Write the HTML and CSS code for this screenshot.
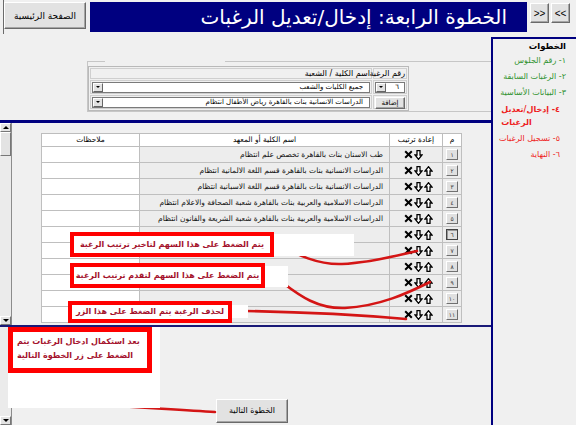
FILE: index.html
```html
<!DOCTYPE html>
<html lang="ar">
<head>
<meta charset="utf-8">
<title>الخطوة الرابعة</title>
<link rel="stylesheet" href="styles.css">
</head>
<body>
<div class="page">
  <header class="top">
    <div class="home-wrap"><button class="btn home">الصفحة الرئيسية</button></div>
    <div class="titlebar">الخطوة الرابعة: إدخال/تعديل الرغبات</div>
    <div class="navs"><button class="btn nav">&lt;&lt;</button><button class="btn nav">&gt;&gt;</button></div>
  </header>

  <div class="frames">
    <div class="leftcol">
      <section class="formframe">
        <fieldset class="fs">
          <legend class="lg"></legend>
          <div class="addbox">
            <div class="arow head">
              <div class="acell wide"><span class="ah">اسم الكلية / الشعبة</span></div>
              <div class="acell narrow"><span class="ah">رقم الرغبة</span></div>
            </div>
            <div class="arow">
              <div class="acell wide"><div class="sel"><span class="sel-b"></span><span class="sel-v" dir="rtl">جميع الكليات والشعب</span></div></div>
              <div class="acell narrow"><div class="sel sm"><span class="sel-b"></span><span class="sel-v" dir="rtl">٦</span></div></div>
            </div>
            <div class="arow">
              <div class="acell wide"><div class="sel"><span class="sel-b"></span><span class="sel-v" dir="rtl">الدراسات الانسانية بنات بالقاهرة رياض الأطفال انتظام</span></div></div>
              <div class="acell narrow"><button class="btn add">إضافة</button></div>
            </div>
          </div>
        </fieldset>
      </section>

      <section class="mainframe">
        <div class="vscroll">
          <span class="sb-btn"><i class="tri up"></i></span>
          <span class="sb-thumb"></span>
          <span class="sb-track"></span>
          <span class="sb-btn"><i class="tri down"></i></span>
        </div>
        <div class="tblwrap">
          <table class="grid" dir="rtl">
            <colgroup><col class="c-num"><col class="c-ord"><col class="c-name"><col class="c-note"></colgroup>
            <thead>
              <tr><th>م</th><th>إعادة ترتيب</th><th>اسم الكلية أو المعهد</th><th>ملاحظات</th></tr>
            </thead>
            <tbody>
              <tr><td class="num"><span class="nb">١</span></td><td class="ord"><span class="icons"><svg class="ic" viewBox="0 0 9 9"><path d="M1.2 1.2L7.8 7.8M7.8 1.2L1.2 7.8"/></svg><svg class="ic ar" viewBox="0 0 8 10"><path d="M2.5 .7H5.5V5H7.4L4 9.3L.6 5H2.5Z"/></svg></span></td><td class="name">طب الاسنان بنات بالقاهرة تخصص علم انتظام</td><td class="note"></td></tr>
              <tr><td class="num"><span class="nb">٢</span></td><td class="ord"><span class="icons"><svg class="ic" viewBox="0 0 9 9"><path d="M1.2 1.2L7.8 7.8M7.8 1.2L1.2 7.8"/></svg><svg class="ic ar" viewBox="0 0 8 10"><path d="M2.5 .7H5.5V5H7.4L4 9.3L.6 5H2.5Z"/></svg><svg class="ic ar" viewBox="0 0 8 10"><path d="M2.5 9.3H5.5V5H7.4L4 .7L.6 5H2.5Z"/></svg></span></td><td class="name">الدراسات الانسانية بنات بالقاهرة قسم اللغة الالمانية انتظام</td><td class="note"></td></tr>
              <tr><td class="num"><span class="nb">٣</span></td><td class="ord"><span class="icons"><svg class="ic" viewBox="0 0 9 9"><path d="M1.2 1.2L7.8 7.8M7.8 1.2L1.2 7.8"/></svg><svg class="ic ar" viewBox="0 0 8 10"><path d="M2.5 .7H5.5V5H7.4L4 9.3L.6 5H2.5Z"/></svg><svg class="ic ar" viewBox="0 0 8 10"><path d="M2.5 9.3H5.5V5H7.4L4 .7L.6 5H2.5Z"/></svg></span></td><td class="name">الدراسات الانسانية بنات بالقاهرة قسم اللغة الاسبانية انتظام</td><td class="note"></td></tr>
              <tr><td class="num"><span class="nb">٤</span></td><td class="ord"><span class="icons"><svg class="ic" viewBox="0 0 9 9"><path d="M1.2 1.2L7.8 7.8M7.8 1.2L1.2 7.8"/></svg><svg class="ic ar" viewBox="0 0 8 10"><path d="M2.5 .7H5.5V5H7.4L4 9.3L.6 5H2.5Z"/></svg><svg class="ic ar" viewBox="0 0 8 10"><path d="M2.5 9.3H5.5V5H7.4L4 .7L.6 5H2.5Z"/></svg></span></td><td class="name">الدراسات الاسلامية والعربية بنات بالقاهرة شعبة الصحافة والاعلام انتظام</td><td class="note"></td></tr>
              <tr><td class="num"><span class="nb">٥</span></td><td class="ord"><span class="icons"><svg class="ic" viewBox="0 0 9 9"><path d="M1.2 1.2L7.8 7.8M7.8 1.2L1.2 7.8"/></svg><svg class="ic ar" viewBox="0 0 8 10"><path d="M2.5 .7H5.5V5H7.4L4 9.3L.6 5H2.5Z"/></svg><svg class="ic ar" viewBox="0 0 8 10"><path d="M2.5 9.3H5.5V5H7.4L4 .7L.6 5H2.5Z"/></svg></span></td><td class="name">الدراسات الاسلامية والعربية بنات بالقاهرة شعبة الشريعة والقانون انتظام</td><td class="note"></td></tr>
              <tr><td class="num"><span class="nb sel6">٦</span></td><td class="ord"><span class="icons"><svg class="ic" viewBox="0 0 9 9"><path d="M1.2 1.2L7.8 7.8M7.8 1.2L1.2 7.8"/></svg><svg class="ic ar" viewBox="0 0 8 10"><path d="M2.5 .7H5.5V5H7.4L4 9.3L.6 5H2.5Z"/></svg><svg class="ic ar" viewBox="0 0 8 10"><path d="M2.5 9.3H5.5V5H7.4L4 .7L.6 5H2.5Z"/></svg></span></td><td class="name"></td><td class="note"></td></tr>
              <tr><td class="num"><span class="nb">٧</span></td><td class="ord"><span class="icons"><svg class="ic" viewBox="0 0 9 9"><path d="M1.2 1.2L7.8 7.8M7.8 1.2L1.2 7.8"/></svg><svg class="ic ar" viewBox="0 0 8 10"><path d="M2.5 .7H5.5V5H7.4L4 9.3L.6 5H2.5Z"/></svg><svg class="ic ar" viewBox="0 0 8 10"><path d="M2.5 9.3H5.5V5H7.4L4 .7L.6 5H2.5Z"/></svg></span></td><td class="name"></td><td class="note"></td></tr>
              <tr><td class="num"><span class="nb">٨</span></td><td class="ord"><span class="icons"><svg class="ic" viewBox="0 0 9 9"><path d="M1.2 1.2L7.8 7.8M7.8 1.2L1.2 7.8"/></svg><svg class="ic ar" viewBox="0 0 8 10"><path d="M2.5 .7H5.5V5H7.4L4 9.3L.6 5H2.5Z"/></svg><svg class="ic ar" viewBox="0 0 8 10"><path d="M2.5 9.3H5.5V5H7.4L4 .7L.6 5H2.5Z"/></svg></span></td><td class="name"></td><td class="note"></td></tr>
              <tr><td class="num"><span class="nb">٩</span></td><td class="ord"><span class="icons"><svg class="ic" viewBox="0 0 9 9"><path d="M1.2 1.2L7.8 7.8M7.8 1.2L1.2 7.8"/></svg><svg class="ic ar" viewBox="0 0 8 10"><path d="M2.5 .7H5.5V5H7.4L4 9.3L.6 5H2.5Z"/></svg><svg class="ic ar" viewBox="0 0 8 10"><path d="M2.5 9.3H5.5V5H7.4L4 .7L.6 5H2.5Z"/></svg></span></td><td class="name"></td><td class="note"></td></tr>
              <tr><td class="num"><span class="nb">١٠</span></td><td class="ord"><span class="icons"><svg class="ic" viewBox="0 0 9 9"><path d="M1.2 1.2L7.8 7.8M7.8 1.2L1.2 7.8"/></svg><svg class="ic ar" viewBox="0 0 8 10"><path d="M2.5 .7H5.5V5H7.4L4 9.3L.6 5H2.5Z"/></svg><svg class="ic ar" viewBox="0 0 8 10"><path d="M2.5 9.3H5.5V5H7.4L4 .7L.6 5H2.5Z"/></svg></span></td><td class="name"></td><td class="note"></td></tr>
              <tr><td class="num"><span class="nb">١١</span></td><td class="ord"><span class="icons"><svg class="ic" viewBox="0 0 9 9"><path d="M1.2 1.2L7.8 7.8M7.8 1.2L1.2 7.8"/></svg><svg class="ic ar" viewBox="0 0 8 10"><path d="M2.5 .7H5.5V5H7.4L4 9.3L.6 5H2.5Z"/></svg><svg class="ic ar" viewBox="0 0 8 10"><path d="M2.5 9.3H5.5V5H7.4L4 .7L.6 5H2.5Z"/></svg></span></td><td class="name"></td><td class="note"></td></tr>
            </tbody>
          </table>
        </div>
      </section>

      <section class="bottomframe">
        <div class="vscroll">
          <span class="sb-track"></span>
          <span class="sb-btn"><i class="tri down"></i></span>
        </div>
        <div class="nextwrap"><button class="btn next">الخطوة التالية</button></div>
      </section>
    </div>

    <aside class="steps">
      <div class="steps-title">الخطوات</div>
      <div class="step done">١- رقم الجلوس</div>
      <div class="step done">٢- الرغبات السابقة</div>
      <div class="step done">٣- البيانات الأساسية</div>
      <div class="step cur"><span class="two">٤- إدخال/تعديل<br>الرغبات</span></div>
      <div class="step todo">٥- تسجيل الرغبات</div>
      <div class="step todo">٦- النهاية</div>
    </aside>
  </div>

  <svg class="arrows" width="576" height="425" viewBox="0 0 576 425">
    <g fill="none" stroke="#d41515" stroke-width="2.6" stroke-linecap="round">
      <path d="M274 243 C298 255 318 265 342 264 C370 263 395 256 417 251"/>
      <path d="M283 283 C300 296 318 309 345 308 C380 306 408 293 430 282"/>
      <path d="M246 311 C300 312 360 315 406 319"/>
      <path d="M31 358 C24 380 24 398 60 402 C110 406 170 409 215 412"/>
    </g>
  </svg>

  <div class="ann ann-a"><div class="ann-box">يتم الضغط على هذا السهم لتاخير ترتيب الرغبة</div></div>
  <div class="ann ann-b"><div class="ann-box">يتم الضغط على هذا السهم لتقدم ترتيب الرغبة</div></div>
  <div class="ann ann-c"><div class="ann-box">لحذف الرغبة يتم الضغط على هذا الزر</div></div>
  <div class="ann ann-d"><div class="ann-box">بعد استكمال ادخال الرغبات يتم<br>الضغط على زر الخطوة التالية</div></div>
</div>
</body>
</html>
```

FILE: styles.css
```css
* { box-sizing: border-box; }
html, body { margin: 0; padding: 0; }
body {
  width: 576px;
  height: 425px;
  overflow: hidden;
  background: #f0f0f0;
  font-family: "DejaVu Sans", sans-serif;
  color: #000;
}
.page { position: relative; width: 576px; height: 425px; }

/* buttons */
.btn {
  font-family: "DejaVu Sans", sans-serif;
  background: #e2e2e2;
  color: #000;
  border: 1px solid;
  border-color: #fff #6a6a6a #6a6a6a #fff;
  box-shadow: inset -1px -1px 0 #a5a5a5;
  padding: 0;
  margin: 0;
  direction: rtl;
}

/* header */
.top { display: flex; align-items: flex-start; height: 37px; }
.home-wrap {
  margin-left: 3px;
  width: 87px;
  height: 34px;
  border-left: 1px solid #6b6b6b;
  padding-top: 2px;
}
.home { width: 82px; height: 27px; font-size: 9px; }
.titlebar {
  margin-top: 2px;
  width: 437px;
  height: 30px;
  background: #000080;
  color: #fff;
  font-size: 20px;
  line-height: 30px;
  text-align: right;
  padding-right: 20px;
  direction: rtl;
  white-space: nowrap;
}
.navs { display: flex; gap: 2px; margin-left: 3px; margin-top: 3px; }
.nav { width: 19px; height: 20px; font-size: 10px; font-family: "Liberation Sans", sans-serif; }

/* frames */
.frames { display: grid; grid-template-columns: 491px 85px; height: 388px; }
.leftcol { display: flex; flex-direction: column; height: 388px; }

/* add form */
.formframe { height: 83px; padding: 23px 0 0 87px; }
.fs {
  margin: 0;
  padding: 0;
  height: 52px;
  border: 1px solid #c6c6c6;
  border-right: none;
}
.lg { margin-left: 17px; width: 120px; height: 2px; padding: 0; font-size: 0; line-height: 0; }
.addbox {
  margin-top: 4px;
  width: 321px;
  border: 1px solid #b9b9b9;
  padding: 1px;
  display: flex;
  flex-direction: column;
  gap: 1px;
}
.arow { display: flex; gap: 1px; }
.acell { border: 1px solid #cfcfcf; padding: 1px; height: 14px; }
.head .acell { height: 11px; padding: 0 1px 0 0; }
.wide { width: 283px; }
.narrow { width: 34px; }
.ah {
  display: block;
  direction: rtl;
  text-align: right;
  font-size: 8px;
  line-height: 9px;
  white-space: nowrap;
}
.sel {
  display: flex;
  direction: ltr;
  justify-content: space-between;
  align-items: center;
  height: 11px;
  background: #fff;
  border: 1px solid #7a7a7a;
  overflow: hidden;
}
.sel-v {
  margin-left: auto;
  font-size: 7px;
  line-height: 9px;
  padding-right: 6px;
  white-space: nowrap;
}
.sel.sm .sel-v { padding-right: 5px; }
.sel-b {
  flex: none;
  position: relative;
  width: 10px;
  height: 9px;
  background: #e2e2e2;
  border: 1px solid;
  border-color: #fff #666 #666 #fff;
}
.sel-b::after {
  content: "";
  position: absolute;
  left: 2px;
  top: 2px;
  border-left: 2px solid transparent;
  border-right: 2px solid transparent;
  border-top: 2px solid #000;
}
.add { width: 30px; height: 12px; font-size: 7px; line-height: 9px; display: block; }

/* main frame */
.mainframe { height: 205px; border-top: 3px solid #000080; display: flex; }
.vscroll {
  width: 12px;
  flex: none;
  background: #ebebeb;
  border-right: 1px solid #8c8c8c;
  display: flex;
  flex-direction: column;
}
.sb-btn {
  height: 9px;
  flex: none;
  background: #e3e3e3;
  border: 1px solid;
  border-color: #fff #777 #777 #fff;
  display: flex;
  align-items: center;
  justify-content: center;
}
.sb-thumb {
  height: 24px;
  flex: none;
  background: #e3e3e3;
  border: 1px solid;
  border-color: #fff #777 #777 #fff;
}
.sb-track { flex: 1; }
.tri { display: block; width: 0; height: 0; border-left: 3px solid transparent; border-right: 3px solid transparent; }
.tri.up { border-bottom: 3px solid #000; }
.tri.down { border-top: 3px solid #000; }

.tblwrap { padding: 10px 0 0 29px; overflow: hidden; }
.grid {
  width: 420px;
  border-collapse: collapse;
  table-layout: fixed;
  border: 1px solid #a8a8a8;
  font-size: 7.5px;
  line-height: 12px;
}
.c-num { width: 19px; }
.c-ord { width: 53px; }
.c-name { width: 250px; }
.c-note { width: 98px; }
.grid th {
  height: 13px;
  background: #fff;
  font-size: 7.5px;
  font-weight: normal;
  line-height: 10px;
  padding: 0;
  border: 1px solid #bdbdbd;
  white-space: nowrap;
}
.grid td {
  height: 16px;
  padding: 0;
  border: 1px solid #bfbfbf;
  background: #ededed;
  white-space: nowrap;
  overflow: hidden;
  vertical-align: middle;
}
.grid td.note { background: #fff; }
.grid td.name {
  text-align: right;
  padding-right: 6px;
  color: #111;
}
.num { text-align: center; }
.nb {
  display: inline-block;
  vertical-align: middle;
  width: 12px;
  height: 11px;
  background: #e0e0e0;
  border: 1px solid;
  border-color: #fff #707070 #707070 #fff;
  font-size: 6px;
  line-height: 9px;
  text-align: center;
  color: #333;
}
.nb.sel6 { border: 1px solid #444; box-shadow: inset 1px 1px 0 #999; }
.icons {
  display: flex;
  direction: ltr;
  gap: 1px;
  padding-left: 14px;
  align-items: center;
  height: 12px;
}
.ic { width: 9px; height: 9px; fill: none; stroke: #000; stroke-width: 2; flex: none; }
.ic.ar { width: 9px; height: 10px; stroke-width: 1.3; fill: #fff; }

/* bottom frame */
.bottomframe { flex: 1; border-top: 2px solid #1a1a78; display: flex; }
.nextwrap { padding: 71px 0 0 204px; }
.next { width: 72px; height: 24px; font-size: 8px; }

/* sidebar */
.steps {
  border-left: 2px solid #000080;
  border-top: 2px solid #000080;
  direction: rtl;
  text-align: right;
  padding-right: 10px;
}
.steps-title { font-size: 8.5px; font-weight: bold; line-height: 14px; }
.step { font-size: 8px; line-height: 16px; white-space: nowrap; }
.done { color: #2f922f; }
.cur, .todo { color: #ee1c1c; margin-right: 6px; }
.cur { font-weight: bold; }
.two { display: inline-block; text-align: left; line-height: 13px; padding-top: 2px; }

/* annotations */
.arrows { position: absolute; left: 0; top: 0; pointer-events: none; z-index: 2; }
.ann { position: absolute; background: #fff; z-index: 3; }
.ann-box {
  position: absolute;
  left: 0;
  border: 4px solid #ff0000;
  color: #a4112c;
  font-size: 8px;
  font-weight: bold;
  direction: rtl;
  text-align: center;
  white-space: nowrap;
  background: #fff;
}
.ann-a { left: 70px; top: 234px; width: 284px; height: 22px; }
.ann-a .ann-box { top: -2px; width: 204px; height: 25px; line-height: 17px; }
.ann-b { left: 70px; top: 266px; width: 218px; height: 21px; }
.ann-b .ann-box { top: -3px; width: 195px; height: 25px; line-height: 17px; }
.ann-c { left: 68px; top: 305px; width: 180px; height: 13px; }
.ann-c .ann-box { top: -4px; width: 164px; height: 22px; line-height: 14px; }
.ann-d { left: 8px; top: 327px; width: 152px; height: 81px; }
.ann-d .ann-box {
  top: 0;
  width: 144px;
  height: 46px;
  border-width: 5px;
  line-height: 14px;
  text-align: left;
  padding: 3px 4px 0;
}
```
